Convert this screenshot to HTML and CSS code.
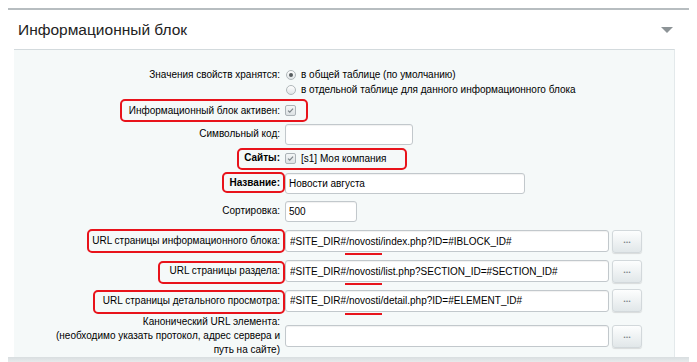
FILE: index.html
```html
<!DOCTYPE html>
<html lang="ru">
<head>
    <meta charset="UTF-8">
    <title>Информационный блок</title>
    <link rel="stylesheet" href="styles.css">
</head>
<body>
    <div class="card">
        <div class="card-head">
            <h2>Информационный блок</h2>
            <span class="arrow"></span>
        </div>

        <div class="panel">
            <div class="row row-store">
                <div class="lbl">Значения свойств хранятся:</div>
                <div class="ctl">
                    <div class="radio-line"><span class="radio on"></span>в общей таблице (по умолчанию)</div>
                    <div class="radio-line"><span class="radio"></span>в отдельной таблице для данного информационного блока</div>
                </div>
            </div>

            <div class="row row-active">
                <div class="lbl">Информационный блок активен:</div>
                <div class="ctl"><span class="check"><svg viewBox="0 0 11 11"><path d="M2.5 5.6 L4.6 7.6 L8.6 3.2" /></svg></span></div>
                <span class="mark mark-active"></span>
            </div>

            <div class="row row-code">
                <div class="lbl">Символьный код:</div>
                <div class="ctl"><input class="field w-code" type="text" value=""></div>
            </div>

            <div class="row row-sites">
                <div class="lbl"><b>Сайты:</b></div>
                <div class="ctl"><span class="check"><svg viewBox="0 0 11 11"><path d="M2.5 5.6 L4.6 7.6 L8.6 3.2" /></svg></span><span class="check-text">[s1] Моя компания</span></div>
                <span class="mark mark-sites"></span>
            </div>

            <div class="row row-name">
                <div class="lbl"><b>Название:</b></div>
                <div class="ctl"><input class="field w-name" type="text" value="Новости августа"></div>
                <span class="mark mark-name"></span>
            </div>

            <div class="row row-sort">
                <div class="lbl">Сортировка:</div>
                <div class="ctl"><input class="field w-sort" type="text" value="500"></div>
            </div>

            <div class="row row-url">
                <div class="lbl">URL страницы информационного блока:</div>
                <div class="ctl url-group">
                    <div class="url-wrap">
                        <input class="field w-url" type="text" value="#SITE_DIR#/novosti/index.php?ID=#IBLOCK_ID#">
                        <span class="underline"></span>
                    </div>
                    <button class="dots-btn">...</button>
                </div>
                <span class="mark mark-url1"></span>
            </div>

            <div class="row row-url">
                <div class="lbl">URL страницы раздела:</div>
                <div class="ctl url-group">
                    <div class="url-wrap">
                        <input class="field w-url" type="text" value="#SITE_DIR#/novosti/list.php?SECTION_ID=#SECTION_ID#">
                        <span class="underline"></span>
                    </div>
                    <button class="dots-btn">...</button>
                </div>
                <span class="mark mark-url2"></span>
            </div>

            <div class="row row-url row-detail">
                <div class="lbl">URL страницы детального просмотра:</div>
                <div class="ctl url-group">
                    <div class="url-wrap">
                        <input class="field w-url" type="text" value="#SITE_DIR#/novosti/detail.php?ID=#ELEMENT_ID#">
                        <span class="underline"></span>
                    </div>
                    <button class="dots-btn">...</button>
                </div>
                <span class="mark mark-url3"></span>
            </div>

            <div class="row row-canon">
                <div class="lbl">Канонический URL элемента:<br>(необходимо указать протокол, адрес сервера и<br>путь на сайте)</div>
                <div class="ctl url-group">
                    <div class="url-wrap">
                        <input class="field w-url" type="text" value="">
                    </div>
                    <button class="dots-btn">...</button>
                </div>
            </div>
        </div>

        <div class="card-foot"></div>
    </div>
</body>
</html>
```

FILE: styles.css
```css
body {
    margin: 8px;
    background: #fff;
    color: #000;
    font-family: "Liberation Sans", Arial, sans-serif;
    font-size: 10px;
}

.card {
    border-top: 2px solid #b7bdc0;
}

.card-head {
    height: 39px;
    display: flex;
    align-items: center;
    justify-content: space-between;
    padding: 0 16px 0 10px;
}

.card-head h2 {
    margin: 0;
    font-size: 15.5px;
    font-weight: normal;
    color: #222;
}

.arrow {
    width: 0;
    height: 0;
    border-left: 6px solid transparent;
    border-right: 6px solid transparent;
    border-top: 6px solid #8d9497;
}

.panel {
    margin: 0 14px 0 6px;
    background: #f5f9f9;
    border-top: 1px solid #d3dadd;
    border-right: 1px solid #e3e9eb;
}

/* form rows */
.row {
    position: relative;
    display: grid;
    grid-template-columns: 266px 1fr;
    column-gap: 5px;
    align-items: center;
}

.lbl {
    text-align: right;
    line-height: 14px;
}

.ctl {
    display: flex;
    align-items: center;
}

.row-store { height: 49px; align-items: start; padding-top: 17px; box-sizing: border-box; }
.row-store .lbl { line-height: 15px; }
.row-store .ctl { flex-direction: column; align-items: flex-start; }
.row-active { height: 23px; }
.row-code { height: 24px; }
.row-sites { height: 24px; }
.row-name { height: 26px; }
.row-sort { height: 30px; }
.row-url { height: 30px; }
.row-detail { height: 29px; }
.row-canon { height: 42px; }

.radio-line {
    display: flex;
    align-items: center;
    height: 15px;
}

.radio {
    width: 10px;
    height: 10px;
    box-sizing: border-box;
    margin: 0 5px 0 1px;
    border: 1px solid #b0b7ba;
    border-radius: 50%;
    background: linear-gradient(#ffffff, #dfe4e6);
    position: relative;
}

.radio.on::after {
    content: "";
    position: absolute;
    left: 2px;
    top: 2px;
    width: 4px;
    height: 4px;
    border-radius: 50%;
    background: #555b5e;
}

.check {
    width: 11px;
    height: 11px;
    box-sizing: border-box;
    border: 1px solid #acb3b7;
    border-radius: 2px;
    background: linear-gradient(#f4f6f7, #dde2e4);
    display: inline-flex;
}

.check svg {
    width: 9px;
    height: 9px;
}

.check path {
    fill: none;
    stroke: #7d8488;
    stroke-width: 1.4;
}

.check-text {
    margin-left: 5px;
}

.field {
    height: 21px;
    box-sizing: border-box;
    border: 1px solid #c2c8cc;
    border-radius: 3px;
    background: #fff;
    box-shadow: inset 0 1px 1px rgba(0, 0, 0, 0.06);
    font-family: inherit;
    font-size: 10px;
    color: #000;
    padding: 0 3px;
    margin: 0;
    outline: none;
}

.w-code { width: 128px; }
.w-name { width: 240px; }
.w-sort { width: 72px; }
.w-url { width: 324px; height: 22px; padding: 0 4px; }

.url-group {
    gap: 3px;
}

.url-wrap {
    position: relative;
    display: flex;
}

.dots-btn {
    width: 30px;
    height: 23px;
    border: 1px solid #d2d8db;
    border-radius: 3px;
    background: linear-gradient(#fdfefe, #e1e7e9);
    box-shadow: 0 1px 1px rgba(0, 0, 0, 0.12);
    color: #7b8387;
    font-family: inherit;
    font-size: 9px;
    font-weight: bold;
    padding: 0 0 3px;
}

/* red annotation marks */
.mark {
    position: absolute;
    box-sizing: border-box;
    border: 2px solid #e8131b;
    border-radius: 5px;
    pointer-events: none;
}

.mark-active { left: 106px; top: 0; width: 188px; height: 23px; }
.mark-sites { left: 223px; top: 2px; width: 170px; height: 22px; }
.mark-name { left: 208px; top: 2px; width: 63px; height: 21px; }
.mark-url1 { left: 73px; top: 3px; width: 198px; height: 24px; }
.mark-url2 { left: 144px; top: 5px; width: 127px; height: 23px; }
.mark-url3 { left: 79px; top: 4px; width: 192px; height: 24px; }

.underline {
    position: absolute;
    left: 60px;
    top: 23px;
    width: 37px;
    height: 2px;
    background: #e8131b;
}

.card-foot {
    height: 8px;
    background: linear-gradient(#d9dee0, #eef1f2);
}
```
